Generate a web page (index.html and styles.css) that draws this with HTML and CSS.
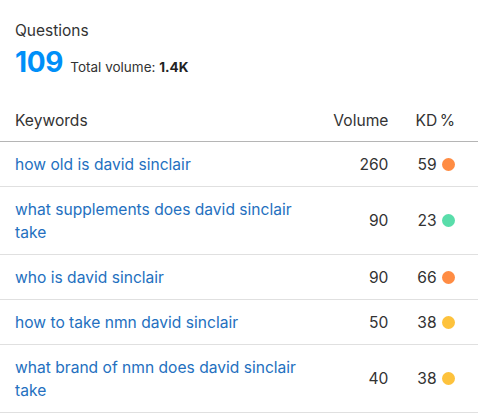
FILE: index.html
```html
<!DOCTYPE html>
<html>
<head>
<meta charset="utf-8">
<link rel="stylesheet" href="styles.css">
</head>
<body>
<div class="widget">
  <div class="summary">
    <div class="title">Questions</div>
    <div class="stats">
      <span class="count">109</span>
      <span class="total">Total volume: <b>1.4K</b></span>
    </div>
  </div>
  <table class="kw-table">
    <thead>
      <tr><th class="kw">Keywords</th><th class="vol">Volume</th><th class="kd">KD %</th></tr>
    </thead>
    <tbody>
      <tr><td class="kw"><a href="#">how old is david sinclair</a></td><td class="vol">260</td><td class="kd">59 <span class="dot orange"></span></td></tr>
      <tr><td class="kw"><a href="#">what supplements does david sinclair take</a></td><td class="vol">90</td><td class="kd">23 <span class="dot green"></span></td></tr>
      <tr><td class="kw"><a href="#">who is david sinclair</a></td><td class="vol">90</td><td class="kd">66 <span class="dot orange"></span></td></tr>
      <tr><td class="kw"><a href="#">how to take nmn david sinclair</a></td><td class="vol">50</td><td class="kd">38 <span class="dot yellow"></span></td></tr>
      <tr><td class="kw"><a href="#">what brand of nmn does david sinclair take</a></td><td class="vol">40</td><td class="kd">38 <span class="dot yellow"></span></td></tr>
    </tbody>
  </table>
</div>
</body>
</html>
```
FILE: styles.css
```css
html, body { margin: 0; padding: 0; background: #fff; }
body { font-family: Inter, "Noto Sans", sans-serif; color: #333; width: 479px; }
.widget { width: 478px; }
.summary { padding: 21px 15px 0 15px; }
.title { font-size: 15.5px; line-height: 20px; color: #333; }
.stats { display: flex; align-items: baseline; gap: 7px; margin-top: 4px; }
.count { font-size: 28px; font-weight: 700; color: #008ff8; line-height: 34px; letter-spacing: -0.3px; }
.total { font-size: 13.5px; color: #333; }
.total b { font-weight: 700; color: #222; }
.kw-table { width: 100%; border-collapse: collapse; margin-top: 21px; font-size: 15.6px; }
.kw-table th { font-weight: 400; text-align: left; padding: 11px 0 10px; line-height: 20px; border-bottom: 1px solid #b5b5b5; color: #333; }
.kw-table th.kd { word-spacing: -2px; }
.kw-table td { padding: 10.5px 0; line-height: 23px; border-bottom: 1px solid #e0e0e0; vertical-align: middle; }
.kw-table .kw { padding-left: 15px; width: 300px; padding-right: 10px; }
.kw-table .vol { text-align: right; width: 75px; }
.kw-table .kd { text-align: right; padding-right: 23px; width: 68px; white-space: nowrap; }
.kw-table a { color: #2470c0; text-decoration: none; }
.dot { display: inline-block; width: 13px; height: 13px; border-radius: 50%; vertical-align: -1px; margin-left: 1px; }
.orange { background: #ff8c43; }
.green { background: #59ddaa; }
.yellow { background: #fdc23c; }
```
